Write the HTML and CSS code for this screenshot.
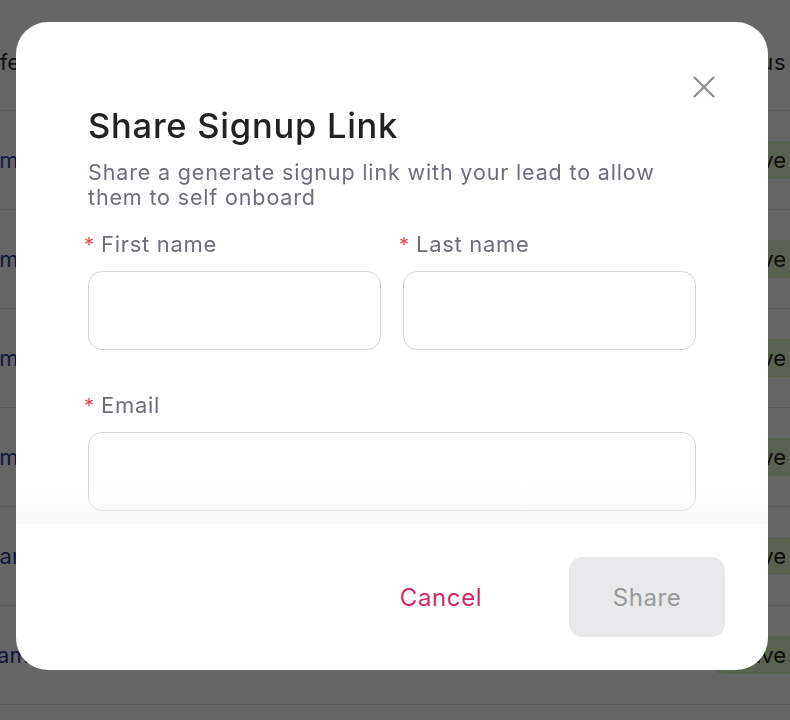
FILE: index.html
```html
<!DOCTYPE html>
<html>
<head>
<meta charset="utf-8">
<link rel="stylesheet" href="styles.css">
</head>
<body>
<div class="page">
  <div class="row head"><div class="lcell"><span class="ltext shift-re">Referral</span></div><div class="rcell"><span class="htext">Status</span></div></div>
  <div class="row"><div class="lcell"><span class="ltext link shift-e">Emma Stone</span></div><div class="rcell"><span class="badge">Active</span></div></div>
  <div class="row"><div class="lcell"><span class="ltext link shift-e">Emma Lewis</span></div><div class="rcell"><span class="badge">Active</span></div></div>
  <div class="row"><div class="lcell"><span class="ltext link shift-e">Emma Clark</span></div><div class="rcell"><span class="badge">Active</span></div></div>
  <div class="row"><div class="lcell"><span class="ltext link shift-e">Emma Davis</span></div><div class="rcell"><span class="badge">Active</span></div></div>
  <div class="row"><div class="lcell"><span class="ltext link shift-j">Jane Moore</span></div><div class="rcell"><span class="badge">Active</span></div></div>
  <div class="row"><div class="lcell"><span class="ltext link shift-s">Samuel Reed</span></div><div class="rcell"><span class="badge">Active</span></div></div>
</div>
<div class="overlay">
  <div class="modal">
    <button class="close" aria-label="Close">
      <svg width="22" height="22" viewBox="0 0 22 22"><path d="M1.5 1.5 L20.5 20.5 M20.5 1.5 L1.5 20.5" stroke="#8a8a8a" stroke-width="2.2" stroke-linecap="round" fill="none"/></svg>
    </button>
    <div class="body">
      <h1 class="title">Share Signup Link</h1>
      <p class="sub">Share a generate signup link with your lead to allow them to self onboard</p>
      <div class="grid">
        <div class="field">
          <label class="label"><span class="req">*</span>First name</label>
          <div class="input"></div>
        </div>
        <div class="field">
          <label class="label"><span class="req">*</span>Last name</label>
          <div class="input"></div>
        </div>
        <div class="field wide">
          <label class="label"><span class="req">*</span>Email</label>
          <div class="input"></div>
        </div>
      </div>
      <div class="fade"></div>
    </div>
    <div class="footer">
      <button class="btn cancel">Cancel</button>
      <button class="btn share">Share</button>
    </div>
  </div>
</div>
</body>
</html>
```
FILE: styles.css
```css
* { box-sizing: border-box; }
html, body { margin: 0; padding: 0; }
body {
  width: 790px;
  height: 720px;
  overflow: hidden;
  font-family: Inter, "Noto Sans", sans-serif;
  background: #fff;
}
.page { width: 790px; }
.row {
  height: 99px;
  border-bottom: 1px solid #e4e4e4;
  display: flex;
  align-items: center;
  justify-content: space-between;
  font-size: 22px;
}
.row.head { height: 111px; padding-top: 14px; }
.lcell {
  width: 40px;
  white-space: nowrap;
  overflow: visible;
}
.ltext { display: inline-block; color: #2a2a2a; }
.ltext.link { color: #2c3a9a; }
.shift-re { margin-left: -27px; }
.shift-e { margin-left: -14px; }
.shift-j { margin-left: -13px; }
.shift-s { margin-left: -17px; }
.rcell {
  width: 80px;
  white-space: nowrap;
  display: flex;
  justify-content: flex-start;
}
.htext { color: #2a2a2a; margin-left: 7px; letter-spacing: 0.6px; }
.badge {
  background: #dcf5c6;
  color: #222;
  border-radius: 14px;
  line-height: 38px;
  padding: 0 16px 0 11px;
}
.overlay {
  position: fixed;
  inset: 0;
  background: rgba(0, 0, 0, 0.6);
  padding: 22px 0 0 16px;
}
.modal {
  position: relative;
  width: 752px;
  height: 648px;
  background: #fff;
  border-radius: 32px;
  display: flex;
  flex-direction: column;
}
.close {
  position: absolute;
  top: 54px;
  right: 53px;
  width: 22px;
  height: 22px;
  padding: 0;
  border: 0;
  background: none;
  display: flex;
}
.body {
  position: relative;
  padding: 83px 72px 0 72px;
}
.title {
  margin: 0;
  font-size: 34.5px;
  font-weight: 500;
  color: #222;
  line-height: 42px;
  letter-spacing: 0.75px;
}
.sub {
  margin: 13px 0 0;
  font-size: 21.5px;
  line-height: 25px;
  color: #6b6f7a;
  letter-spacing: 0.85px;
}
.grid {
  display: grid;
  grid-template-columns: 1fr 1fr;
  column-gap: 22px;
  row-gap: 42px;
  margin-top: 21px;
  padding-bottom: 13px;
}
.field { display: flex; flex-direction: column; gap: 13px; }
.field.wide { grid-column: 1 / 3; }
.label {
  font-size: 22px;
  line-height: 26px;
  color: #6b6f7a;
  margin-left: -4px;
  letter-spacing: 0.7px;
}
.req { color: #e5484d; margin-right: 7px; font-size: 20px; letter-spacing: 0; }
.input {
  height: 79px;
  border: 1px solid #d6d6da;
  border-radius: 14px;
  background: #fff;
}
.fade {
  position: absolute;
  left: 0; right: 0; bottom: 0;
  height: 40px;
  background: linear-gradient(to bottom, rgba(245,245,245,0), rgba(245,245,245,0.6));
  pointer-events: none;
}
.footer {
  display: flex;
  justify-content: flex-end;
  align-items: center;
  gap: 50px;
  padding: 33px 43px 0 0;
}
.btn {
  font-family: Inter, "Noto Sans", sans-serif;
  font-size: 24px;
  letter-spacing: 0.6px;
  border: 0;
  width: 156px;
  height: 80px;
  border-radius: 14px;
  cursor: pointer;
}
.cancel { background: none; color: #d6286b; }
.share { background: #e8e9eb; color: #999; }
```
